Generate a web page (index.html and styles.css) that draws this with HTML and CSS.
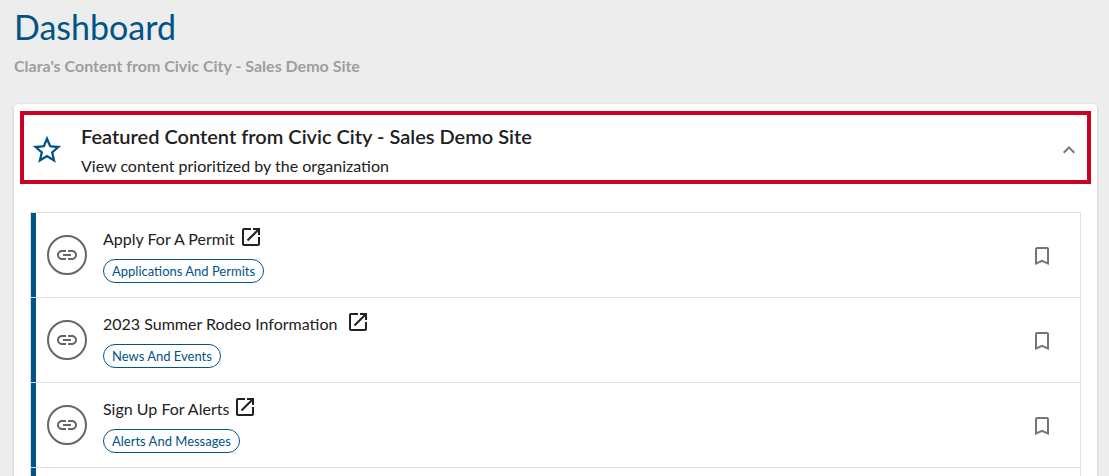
FILE: index.html
```
<!DOCTYPE html>
<html lang="en">
<head>
    <meta charset="UTF-8">
    <meta name="viewport" content="width=device-width, initial-scale=1.0">
    <title>Dashboard</title>
    <link rel="stylesheet" href="styles.css">
</head>
<body>
    <svg class="sprite" aria-hidden="true">
        <symbol id="icon-link" viewBox="0 0 24 24">
            <path d="M3.9 12c0-1.71 1.39-3.1 3.1-3.1h4V7H7c-2.76 0-5 2.24-5 5s2.24 5 5 5h4v-1.9H7c-1.71 0-3.1-1.39-3.1-3.1zM8 13h8v-2H8v2zm9-6h-4v1.9h4c1.71 0 3.1 1.39 3.1 3.1s-1.39 3.1-3.1 3.1h-4V17h4c2.76 0 5-2.24 5-5s-2.24-5-5-5z"/>
        </symbol>
        <symbol id="icon-open" viewBox="0 0 24 24">
            <path d="M19 19H5V5h7V3H5c-1.11 0-2 .9-2 2v14c0 1.1.89 2 2 2h14c1.1 0 2-.9 2-2v-7h-2v7zM14 3v2h3.59l-9.83 9.83 1.41 1.41L19 6.41V10h2V3h-7z"/>
        </symbol>
        <symbol id="icon-bookmark" viewBox="0 0 24 24">
            <path d="M17 3H7c-1.1 0-1.99.9-1.99 2L5 21l7-3 7 3V5c0-1.1-.9-2-2-2zm0 15l-5-2.18L7 18V5h10v13z"/>
        </symbol>
    </svg>
    <header class="page-header">
        <h1>Dashboard</h1>
        <p>Clara's Content from Civic City - Sales Demo Site</p>
    </header>
    <main class="card">
        <button type="button" class="panel-header" aria-expanded="true" aria-controls="featured">
            <svg class="star" viewBox="0 0 24 24"><path d="M22 9.24l-7.19-.62L12 2 9.19 8.63 2 9.24l5.46 4.73L5.82 21 12 17.27 18.18 21l-1.63-7.03L22 9.24zM12 15.4l-3.76 2.27 1-4.28-3.32-2.88 4.38-.38L12 6.1l1.71 4.04 4.38.38-3.32 2.88 1 4.28L12 15.4z"/></svg>
            <span class="panel-text">
                <span class="panel-title">Featured Content from Civic City - Sales Demo Site</span>
                <span class="panel-description">View content prioritized by the organization</span>
            </span>
            <svg class="chevron" viewBox="0 0 24 24"><path d="M12 8l-6 6 1.41 1.41L12 10.83l4.59 4.58L18 14z"/></svg>
        </button>
        <ul class="content-list" id="featured">
            <li class="content-item">
                <span class="avatar"><svg class="icon"><use href="#icon-link"/></svg></span>
                <div class="details">
                    <a class="title" href="#">Apply For A Permit<svg class="icon"><use href="#icon-open"/></svg></a>
                    <a class="chip" href="#">Applications And Permits</a>
                </div>
                <button type="button" class="bookmark" aria-label="Bookmark"><svg class="icon"><use href="#icon-bookmark"/></svg></button>
            </li>
            <li class="content-item">
                <span class="avatar"><svg class="icon"><use href="#icon-link"/></svg></span>
                <div class="details">
                    <a class="title" href="#">2023 Summer Rodeo Information&nbsp;<svg class="icon"><use href="#icon-open"/></svg></a>
                    <a class="chip" href="#">News And Events</a>
                </div>
                <button type="button" class="bookmark" aria-label="Bookmark"><svg class="icon"><use href="#icon-bookmark"/></svg></button>
            </li>
            <li class="content-item">
                <span class="avatar"><svg class="icon"><use href="#icon-link"/></svg></span>
                <div class="details">
                    <a class="title" href="#">Sign Up For Alerts<svg class="icon"><use href="#icon-open"/></svg></a>
                    <a class="chip" href="#">Alerts And Messages</a>
                </div>
                <button type="button" class="bookmark" aria-label="Bookmark"><svg class="icon"><use href="#icon-bookmark"/></svg></button>
            </li>
            <li class="content-item"></li>
        </ul>
    </main>
</body>
</html>
```
FILE: styles.css
```
* {
    box-sizing: border-box;
}
body {
    margin: 0;
    height: 100vh;
    overflow: hidden;
    background-color: #ededed;
    color: #212121;
    font-family: Lato, sans-serif;
    font-size: 16px;
}
.sprite {
    display: none;
}
.page-header {
    padding: 3px 14px 0;
}
h1 {
    margin: 0;
    color: #005486;
    font-size: 34px;
    font-weight: 400;
    line-height: 48px;
}
.page-header p {
    margin: 5px 0 0;
    color: #9e9e9e;
    font-weight: 700;
    line-height: 20px;
}
.card {
    margin: 28px 12px 0 14px;
    padding: 7px 6px 16px;
    background-color: #fff;
    border-radius: 4px;
    box-shadow: 0 1px 3px rgba(0, 0, 0, 0.2);
}
.panel-header {
    display: flex;
    align-items: center;
    width: 100%;
    padding: 5px 6px 0;
    background: none;
    border: 4px solid #cc0022;
    color: inherit;
    font: inherit;
    text-align: left;
    cursor: pointer;
}
.star {
    width: 34px;
    height: 34px;
    margin-right: 17px;
    fill: #005486;
}
.panel-text {
    flex: 1;
}
.panel-title,
.panel-description {
    display: block;
}
.panel-title {
    font-size: 20px;
    font-weight: 600;
    line-height: 32px;
}
.panel-description {
    line-height: 28px;
}
.chevron {
    width: 24px;
    height: 24px;
    fill: #757575;
}
.content-list {
    margin: 28px 10px 0;
    padding: 0;
    list-style: none;
    border: 1px solid #e0e0e0;
}
.content-item {
    display: flex;
    align-items: center;
    min-height: 85px;
    padding: 0 26px 0 16px;
    border-bottom: 1px solid #e0e0e0;
    background: linear-gradient(#005486, #005486) left / 5px 100% no-repeat;
}
.icon {
    display: block;
    width: 24px;
    height: 24px;
    fill: currentColor;
}
.avatar {
    display: flex;
    align-items: center;
    justify-content: center;
    width: 40px;
    height: 40px;
    border: 2px solid #666;
    border-radius: 50%;
    color: #666;
}
.details {
    display: flex;
    flex: 1;
    flex-direction: column;
    align-items: flex-start;
    gap: 6px;
    margin-left: 16px;
    padding-bottom: 2px;
}
.title {
    display: flex;
    gap: 4px;
    color: inherit;
    line-height: 28px;
    text-decoration: none;
}
.chip {
    padding: 0 8px;
    border: 1px solid #005486;
    border-radius: 12px;
    color: #005486;
    font-size: 13px;
    line-height: 22px;
    text-decoration: none;
}
.bookmark {
    padding: 2px 0 0;
    background: none;
    border: none;
    color: #757575;
    cursor: pointer;
}
```
